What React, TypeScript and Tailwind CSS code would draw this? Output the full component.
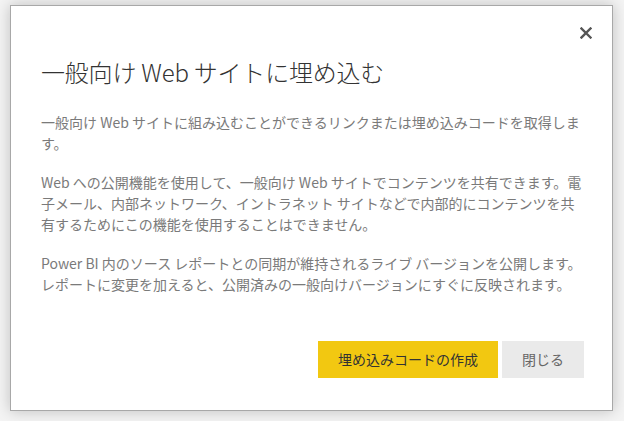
import React from 'react';

const paragraphs = [
  '一般向け Web サイトに組み込むことができるリンクまたは埋め込みコードを取得します。',
  'Web への公開機能を使用して、一般向け Web サイトでコンテンツを共有できます。電子メール、内部ネットワーク、イントラネット サイトなどで内部的にコンテンツを共有するためにこの機能を使用することはできません。',
  'Power BI 内のソース レポートとの同期が維持されるライブ バージョンを公開します。レポートに変更を加えると、公開済みの一般向けバージョンにすぐに反映されます。',
];

function CloseIcon() {
  return (
    <svg width="12" height="12" viewBox="0 0 12 12" aria-hidden="true">
      <path d="M1.5 1.5 L10.5 10.5 M10.5 1.5 L1.5 10.5" stroke="#555" strokeWidth="2.4" strokeLinecap="square" />
    </svg>
  );
}

function App() {
  return (
    <div
      className="w-[624px] h-[421px] bg-[#f4f4f4] pt-[5px] pl-[10px] overflow-hidden"
      style={{ fontFamily: '"Segoe UI", "Noto Sans CJK JP", "Noto Sans", sans-serif' }}
    >
      <div className="w-[603px] h-[406px] bg-white border border-[#a8a8a8] shadow-[0_0_14px_rgba(0,0,0,0.22)] flex flex-col">
        <div className="flex justify-end pt-[21px] pr-[20px]">
          <button className="w-[12px] h-[12px] flex items-center justify-center">
            <CloseIcon />
          </button>
        </div>

        <div className="px-[30px]">
          <h1 className="mt-[17px] text-[24px] leading-[32px] text-[#333333] font-light tracking-[-0.2px]">
            一般向け Web サイトに埋め込む
          </h1>

          <div className="mt-[24px] w-[545px] text-[14px] leading-[21px] text-[#7a7a7a]">
            {paragraphs.map((p, i) => (
              <p key={i} className="mb-[18px]">
                {p}
              </p>
            ))}
          </div>
        </div>

        <div className="mt-auto flex justify-end gap-[4px] pr-[28px] pb-[32px]">
          <button className="w-[180px] h-[37px] bg-[#f2c811] text-[14px] text-[#333333]">
            埋め込みコードの作成
          </button>
          <button className="w-[82px] h-[37px] bg-[#eaeaea] text-[14px] text-[#666666]">
            閉じる
          </button>
        </div>
      </div>
    </div>
  );
}

export default App;
